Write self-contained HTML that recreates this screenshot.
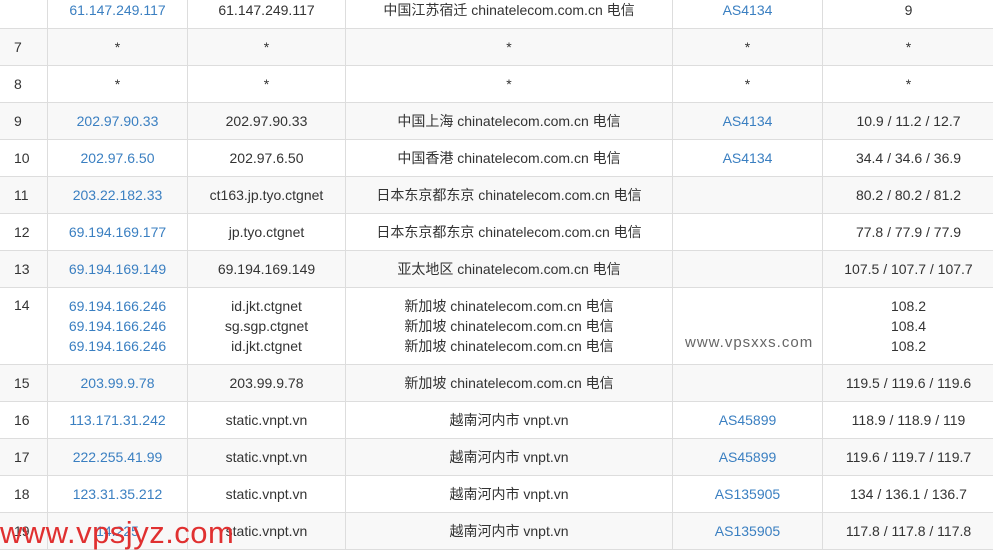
<!DOCTYPE html><html><head><meta charset="utf-8"><style>
body{margin:0;width:993px;height:550px;overflow:hidden;background:#fff;position:relative;font-family:"Liberation Sans","Noto Sans CJK SC",sans-serif;font-size:14px;color:#333}
table{position:absolute;top:-9px;left:-1px;border-collapse:collapse;table-layout:fixed;width:995px}
td{border:1px solid #ddd;height:36px;padding:0;text-align:center;vertical-align:middle;line-height:20px}
td:first-child{text-align:left;padding-left:14px}
tr:nth-child(even){background:#f8f8f8}
.b{color:#3a7fc1}
.t{height:76px}
.wm{position:absolute;left:0;top:515px;font-size:31px;color:#e03030;font-family:"Liberation Sans",sans-serif;letter-spacing:0.5px}
.wm2{position:absolute;left:685px;top:334px;font-size:15px;color:#666;letter-spacing:1px}
</style></head><body>
<table>
<colgroup><col style="width:48px"><col style="width:140px"><col style="width:158px"><col style="width:327px"><col style="width:150px"><col style="width:172px"></colgroup>
<tr><td></td><td class="b">61.147.249.117</td><td>61.147.249.117</td><td>中国江苏宿迁 chinatelecom.com.cn 电信</td><td class="b">AS4134</td><td>9</td></tr>
<tr><td>7</td><td>*</td><td>*</td><td>*</td><td>*</td><td>*</td></tr>
<tr><td>8</td><td>*</td><td>*</td><td>*</td><td>*</td><td>*</td></tr>
<tr><td>9</td><td class="b">202.97.90.33</td><td>202.97.90.33</td><td>中国上海 chinatelecom.com.cn 电信</td><td class="b">AS4134</td><td>10.9 / 11.2 / 12.7</td></tr>
<tr><td>10</td><td class="b">202.97.6.50</td><td>202.97.6.50</td><td>中国香港 chinatelecom.com.cn 电信</td><td class="b">AS4134</td><td>34.4 / 34.6 / 36.9</td></tr>
<tr><td>11</td><td class="b">203.22.182.33</td><td>ct163.jp.tyo.ctgnet</td><td>日本东京都东京 chinatelecom.com.cn 电信</td><td></td><td>80.2 / 80.2 / 81.2</td></tr>
<tr><td>12</td><td class="b">69.194.169.177</td><td>jp.tyo.ctgnet</td><td>日本东京都东京 chinatelecom.com.cn 电信</td><td></td><td>77.8 / 77.9 / 77.9</td></tr>
<tr><td>13</td><td class="b">69.194.169.149</td><td>69.194.169.149</td><td>亚太地区 chinatelecom.com.cn 电信</td><td></td><td>107.5 / 107.7 / 107.7</td></tr>
<tr style="height:77px"><td style="vertical-align:top;padding-top:7px;height:69px">14</td><td class="b">69.194.166.246<br>69.194.166.246<br>69.194.166.246</td><td>id.jkt.ctgnet<br>sg.sgp.ctgnet<br>id.jkt.ctgnet</td><td>新加坡 chinatelecom.com.cn 电信<br>新加坡 chinatelecom.com.cn 电信<br>新加坡 chinatelecom.com.cn 电信</td><td></td><td>108.2<br>108.4<br>108.2</td></tr>
<tr><td>15</td><td class="b">203.99.9.78</td><td>203.99.9.78</td><td>新加坡 chinatelecom.com.cn 电信</td><td></td><td>119.5 / 119.6 / 119.6</td></tr>
<tr><td>16</td><td class="b">113.171.31.242</td><td>static.vnpt.vn</td><td>越南河内市 vnpt.vn</td><td class="b">AS45899</td><td>118.9 / 118.9 / 119</td></tr>
<tr><td>17</td><td class="b">222.255.41.99</td><td>static.vnpt.vn</td><td>越南河内市 vnpt.vn</td><td class="b">AS45899</td><td>119.6 / 119.7 / 119.7</td></tr>
<tr><td>18</td><td class="b">123.31.35.212</td><td>static.vnpt.vn</td><td>越南河内市 vnpt.vn</td><td class="b">AS135905</td><td>134 / 136.1 / 136.7</td></tr>
<tr><td>19</td><td class="b">14.225</td><td>static.vnpt.vn</td><td>越南河内市 vnpt.vn</td><td class="b">AS135905</td><td>117.8 / 117.8 / 117.8</td></tr>
</table>
<div class="wm2">www.vpsxxs.com</div>
<div class="wm">www.vpsjyz.com</div>
</body></html>
